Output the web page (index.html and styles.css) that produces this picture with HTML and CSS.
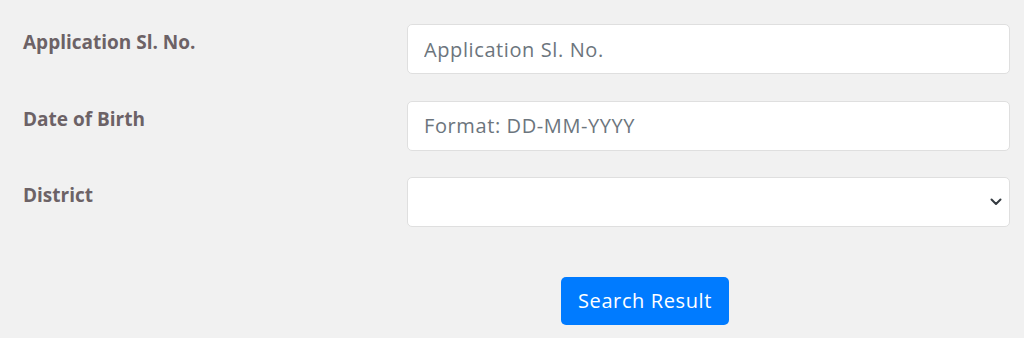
FILE: index.html
```html
<!DOCTYPE html>
<html lang="en">
<head>
  <meta charset="UTF-8" />
  <title>Search Result</title>
  <link rel="stylesheet" href="styles.css">
</head>
<body>
  <form class="search-form">
    <div class="row">
      <label for="appNo">Application Sl. No.</label>
      <input type="text" id="appNo" placeholder="Application Sl. No.">
    </div>

    <div class="row">
      <label for="dob">Date of Birth</label>
      <input type="text" id="dob" placeholder="Format: DD-MM-YYYY">
    </div>

    <div class="row">
      <label for="district">District</label>
      <div class="select-wrap">
        <select id="district">
          <option value=""></option>
        </select>
        <svg class="chevron" width="12" height="8" viewBox="0 0 12 8">
          <path d="M1.5 1.5 L6 6 L10.5 1.5" fill="none" stroke="#343a40" stroke-width="2" stroke-linecap="round" stroke-linejoin="round"/>
        </svg>
      </div>
    </div>

    <div class="actions">
      <button type="submit">Search Result</button>
    </div>
  </form>
</body>
</html>
```

FILE: styles.css
```css
body {
  margin: 0;
  background: #f1f1f1;
  font-family: 'Open Sans', 'Noto Sans', sans-serif;
}

.search-form {
  padding: 24px 14px 0 23px;
}

.row {
  display: grid;
  grid-template-columns: 384px 1fr;
  margin-bottom: 26.5px;
}

label {
  font-size: 19px;
  font-weight: 700;
  color: #6c6266;
  padding-top: 5px;
}

input, select {
  width: 100%;
  height: 50px;
  box-sizing: border-box;
  padding: 0 16px;
  font-family: inherit;
  font-size: 20px;
  letter-spacing: 0.6px;
  color: #495057;
  background: #fff;
  border: 1px solid #dfdfdf;
  border-radius: 5px;
  outline: none;
}

input::placeholder {
  color: #6c757d;
}

.select-wrap {
  position: relative;
}

select {
  appearance: none;
  -webkit-appearance: none;
}

.chevron {
  position: absolute;
  right: 8px;
  top: 21px;
  pointer-events: none;
}

.actions {
  padding-left: 538px;
  padding-top: 23px;
}

button {
  height: 48px;
  padding: 0 17px;
  font-family: inherit;
  font-size: 20px;
  letter-spacing: 0.6px;
  color: #fff;
  background: #007bff;
  border: none;
  border-radius: 5px;
  cursor: pointer;
}
```
